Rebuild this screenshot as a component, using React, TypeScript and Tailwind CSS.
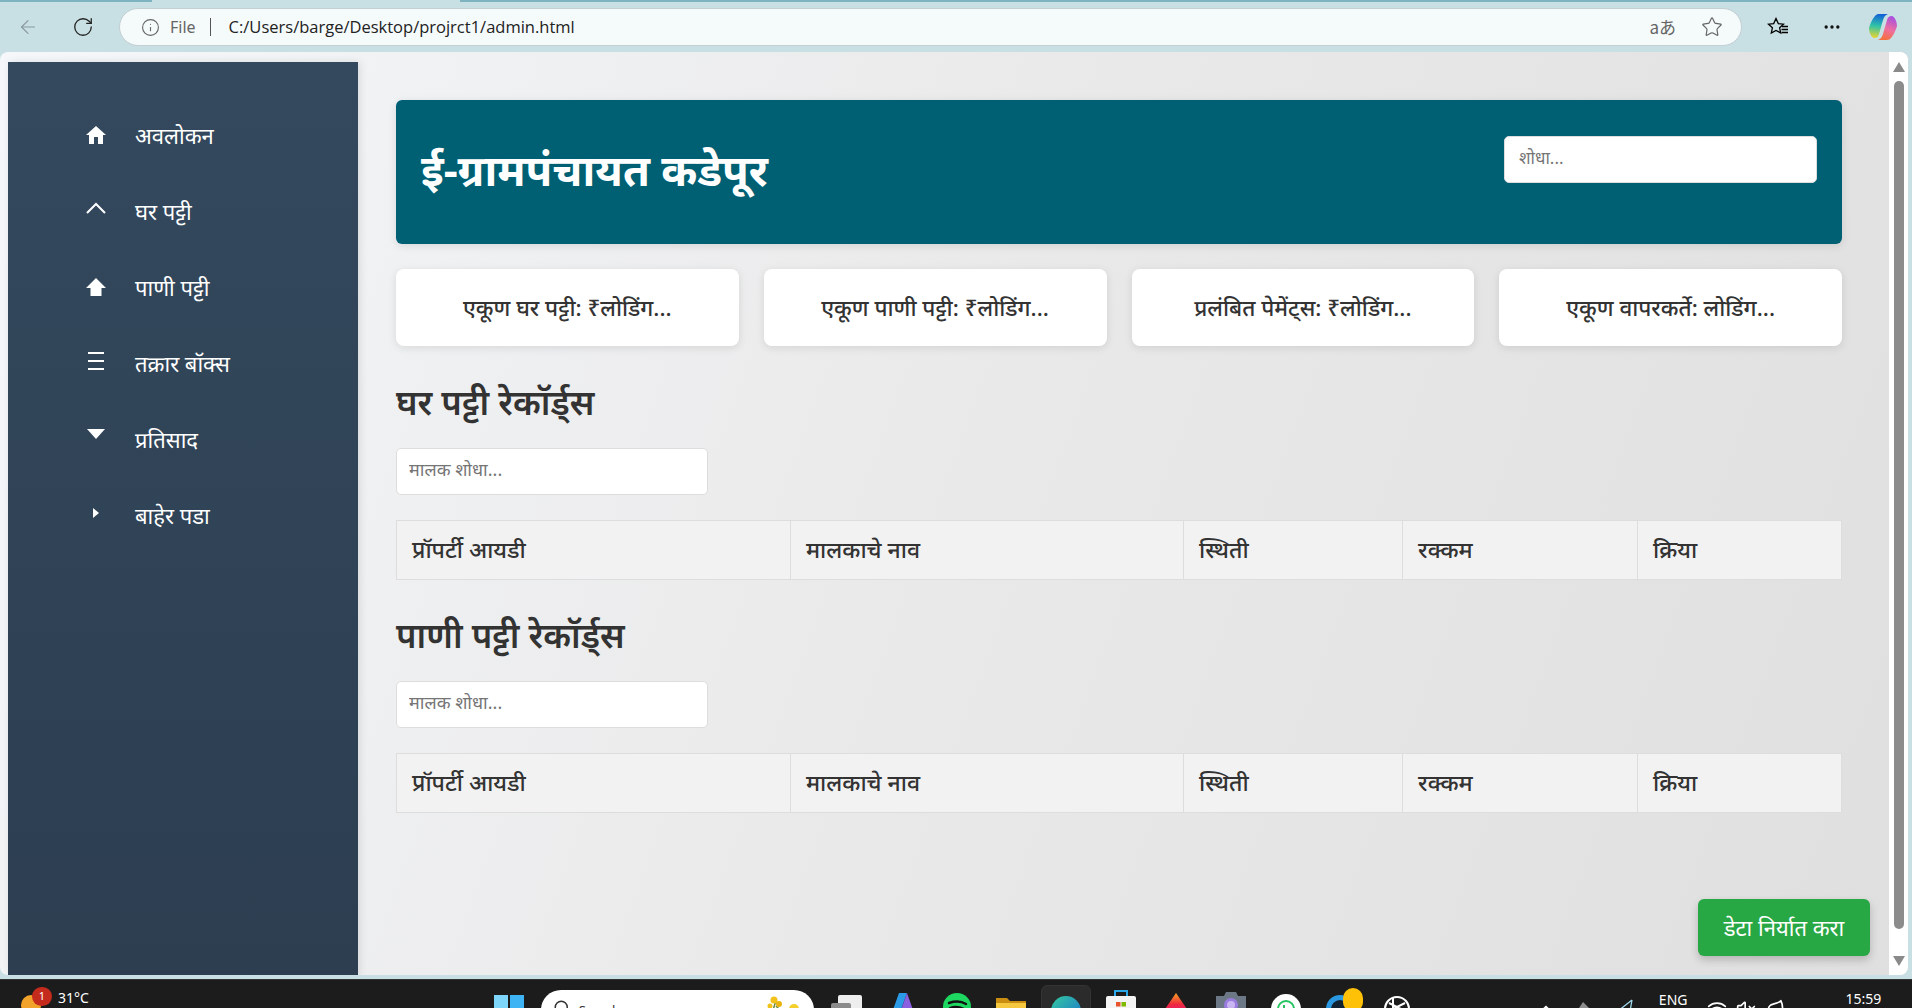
import { ArrowLeft, RotateCw, Info, Star, MoreHorizontal, ChevronUp, Wifi, VolumeX, Leaf, Search } from "lucide-react";
import type { ReactNode } from "react";

const font = "font-['Noto_Sans','Liberation_Sans',sans-serif]";

function HouseIcon() {
  return (
    <svg viewBox="0 0 20 18" className="mt-[4px] w-5 h-[18px] fill-white">
      <path d="M10 0 L20 9 H17 V18 H12 V11 H8 V18 H3 V9 H0 Z" />
    </svg>
  );
}

function UpChevron() {
  return (
    <svg viewBox="0 0 20 12" className="mb-[2px] w-5 h-3 fill-none stroke-white stroke-2">
      <path d="M1 11 L10 2 L19 11" />
    </svg>
  );
}

function UpArrow() {
  return (
    <svg viewBox="0 0 20 18" className="mt-[4px] w-5 h-[18px] fill-white">
      <path d="M10 0 L20 10 H15.5 V18 H4.5 V10 H0 Z" />
    </svg>
  );
}

function Burger() {
  return (
    <svg viewBox="0 0 16 18" className="w-4 h-[18px] stroke-white stroke-2">
      <path d="M0 1 H16 M0 9 H16 M0 17 H16" />
    </svg>
  );
}

function CaretDown() {
  return (
    <svg viewBox="0 0 18 10" className="mb-[6px] w-[18px] h-2.5 fill-white">
      <path d="M0 0 H18 L9 10 Z" />
    </svg>
  );
}

function CaretRight() {
  return (
    <svg viewBox="0 0 6 10" className="w-1.5 h-2.5 fill-white">
      <path d="M0 0 L6 5 L0 10 Z" />
    </svg>
  );
}

function CopilotLogo() {
  return (
    <svg viewBox="0 0 28 28" className="w-7 h-7">
      <defs>
        <linearGradient id="cpA" x1="0.5" y1="0" x2="0.4" y2="1">
          <stop offset="0" stopColor="#1260d8" />
          <stop offset="0.5" stopColor="#2fc3a8" />
          <stop offset="1" stopColor="#e8d430" />
        </linearGradient>
        <linearGradient id="cpB" x1="0.7" y1="0" x2="0.4" y2="1">
          <stop offset="0" stopColor="#a64fe0" />
          <stop offset="0.55" stopColor="#ee6ea0" />
          <stop offset="1" stopColor="#f5703c" />
        </linearGradient>
      </defs>
      <path d="M9 1 H19 C16 2 15 4 14 7 L10 21 C9 24 8 25 5 25 C2 24 0 19 0 15 C1 11 4 5 6 3 C7 2 8 1 9 1 Z" fill="url(#cpA)" />
      <path d="M18 27 H9 C12 26 13 24 14 21 L18 7 C19 4 20 3 23 3 C26 4 28 9 28 13 C27 17 24 23 22 25 C21 26 20 27 18 27 Z" fill="url(#cpB)" />
    </svg>
  );
}

function FavoritesIcon() {
  return (
    <svg viewBox="0 0 22 20" className="w-[22px] h-5 fill-none stroke-black stroke-[1.3]">
      <path d="M9 1.5 L11.3 6.6 L16.5 7.2 L12.6 10.8 L13.7 16 L9 13.4 L4.3 16 L5.4 10.8 L1.5 7.2 L6.7 6.6 Z" />
      <path d="M15 9.5 H21 M14.5 12.5 H21 M14.5 15.5 H21" />
    </svg>
  );
}

function NavItem({ icon, label }: { icon: ReactNode; label: string }) {
  return (
    <a className="h-[76px] flex items-center">
      <span className="w-[30px] ml-[73px] mr-[24px] flex justify-center items-center -mt-1">{icon}</span>
      <span className="text-[22px] text-white">{label}</span>
    </a>
  );
}

function Stat({ text }: { text: string }) {
  return (
    <div className="flex-1 h-[77px] bg-white rounded-lg shadow-[0_2px_8px_rgba(0,0,0,0.1)] flex items-center justify-center text-[22.5px] font-medium text-[#333]">
      {text}
    </div>
  );
}

function Records({ title }: { title: string }) {
  return (
    <section>
      <h2 className="h-[88px] flex items-center text-[34.5px] font-semibold text-[#333]">{title}</h2>
      <input
        placeholder="मालक शोधा..."
        className="mt-[2px] block w-[312px] h-[47px] px-3 pb-[5px] bg-white border border-[#ddd] rounded-[5px] text-[18px] placeholder:text-[#757575]"
      />
      <table className="mt-[25px] w-full table-fixed border-collapse text-[23px] font-medium text-[#333]">
        <thead>
          <tr className="h-[59px] bg-[#f2f2f2]">
            <th className="w-[394px] border border-[#ddd] px-[15px] pb-[2px] text-left font-medium">प्रॉपर्टी आयडी</th>
            <th className="w-[393px] border border-[#ddd] px-[15px] pb-[2px] text-left font-medium">मालकाचे नाव</th>
            <th className="w-[219px] border border-[#ddd] px-[15px] pb-[2px] text-left font-medium">स्थिती</th>
            <th className="w-[235px] border border-[#ddd] px-[15px] pb-[2px] text-left font-medium">रक्कम</th>
            <th className="border border-[#ddd] px-[15px] pb-[2px] text-left font-medium">क्रिया</th>
          </tr>
        </thead>
      </table>
    </section>
  );
}

// taskbar icons are cut off by the screen edge, same as the screenshot
function WinLogo() {
  return (
    <svg viewBox="0 0 30 30" className="mt-[15px] w-[30px] h-[30px]">
      <rect x="0" y="0" width="14" height="14" fill="#7fd6fb" />
      <rect x="16" y="0" width="14" height="14" fill="#3fb4f4" />
      <rect x="0" y="16" width="14" height="14" fill="#3fb4f4" />
      <rect x="16" y="16" width="14" height="14" fill="#1a8fe0" />
    </svg>
  );
}

function Flowers() {
  return (
    <svg viewBox="0 0 40 20" className="w-10 h-5 shrink-0">
      <path d="M10 20 L14 6 M14 12 L22 20" stroke="#6d8a3c" strokeWidth="1.5" />
      <circle cx="12" cy="6" r="3.5" fill="#f2c21a" />
      <circle cx="17" cy="10" r="3" fill="#e8b40f" />
      <circle cx="8" cy="12" r="2.5" fill="#f2c21a" />
      <circle cx="32" cy="15" r="5" fill="#f5cf2b" />
    </svg>
  );
}

function FileStack() {
  return (
    <svg viewBox="0 0 32 24" className="mt-[15px] w-8 h-6">
      <rect x="7" y="0" width="24" height="24" rx="2" fill="#eee" />
      <rect x="0" y="8" width="20" height="16" rx="2" fill="#8b8b8b" />
    </svg>
  );
}

function CopilotApp() {
  return (
    <svg viewBox="0 0 28 28" className="mt-[13px] w-7 h-7">
      <path d="M10 0 H18 L8 28 H0 Z" fill="#2b9be8" />
      <path d="M18 0 L28 28 H14 L11 20 Z" fill="#8a5fe0" />
    </svg>
  );
}

function Spotify() {
  return (
    <svg viewBox="0 0 28 28" className="mt-[13px] w-7 h-7">
      <circle cx="14" cy="14" r="14" fill="#1ed760" />
      <path d="M6 10 C12 8 18 8 23 11 M7 15 C12 13 17 14 21 16" stroke="#111" strokeWidth="2.4" fill="none" strokeLinecap="round" />
    </svg>
  );
}

function Folder() {
  return (
    <svg viewBox="0 0 30 24" className="mt-[16px] w-[30px] h-6">
      <path d="M0 2 H11 L14 5 H30 V24 H0 Z" fill="#c98d12" />
      <rect x="0" y="7" width="30" height="17" fill="#f5c83f" />
    </svg>
  );
}

function EdgeActive() {
  return (
    <div className="mt-[5px] w-[50px] h-10 flex justify-center rounded-md bg-[#2b2b2b] border border-[#333]">
      <svg viewBox="0 0 30 30" className="mt-[10px] w-[30px] h-[30px] shrink-0">
        <defs>
          <linearGradient id="edgeG" x1="0" y1="0" x2="1" y2="1">
            <stop offset="0" stopColor="#35c9a0" />
            <stop offset="1" stopColor="#1a70d0" />
          </linearGradient>
        </defs>
        <circle cx="15" cy="15" r="15" fill="url(#edgeG)" />
        <circle cx="18" cy="20" r="7" fill="#0c3f7f" />
      </svg>
    </div>
  );
}

function StoreBag() {
  return (
    <svg viewBox="0 0 30 30" className="mt-[8px] w-[30px] h-[30px]">
      <path d="M9 8 V3 H21 V8" fill="none" stroke="#2aa7e8" strokeWidth="2" />
      <rect x="0" y="8" width="30" height="22" rx="2" fill="#f4f4f4" />
      <rect x="10" y="14" width="4.5" height="4.5" fill="#e8532b" />
      <rect x="15.5" y="14" width="4.5" height="4.5" fill="#7fba00" />
    </svg>
  );
}

function RedGem() {
  return (
    <svg viewBox="0 0 30 30" className="mt-[13px] w-[30px] h-[30px]">
      <defs>
        <linearGradient id="gemG" x1="0.5" y1="0" x2="0.5" y2="1">
          <stop offset="0" stopColor="#f5a623" />
          <stop offset="0.5" stopColor="#ee2a3c" />
          <stop offset="1" stopColor="#e0117f" />
        </linearGradient>
      </defs>
      <path d="M15 0 L30 22 H0 Z" fill="url(#gemG)" />
    </svg>
  );
}

function Camera() {
  return (
    <svg viewBox="0 0 30 30" className="mt-[11px] w-[30px] h-[30px]">
      <path d="M0 5 H8 L10 1 H20 L22 5 H30 V30 H0 Z" fill="#6d7886" />
      <circle cx="15" cy="14" r="7" fill="#9a7be0" />
      <circle cx="15" cy="14" r="4" fill="#c9b6f0" />
    </svg>
  );
}

function WhatsApp() {
  return (
    <svg viewBox="0 0 30 30" className="mt-[14px] w-[30px] h-[30px]">
      <circle cx="15" cy="15" r="15" fill="#fff" />
      <circle cx="15" cy="15" r="8" fill="none" stroke="#25c45f" strokeWidth="2" />
      <path d="M13 11 V16 H17" fill="none" stroke="#25c45f" strokeWidth="2" />
    </svg>
  );
}

function BlueBadge() {
  return (
    <div className="relative mt-[15px] w-7 h-7 rounded-full border-[5px] border-[#2a98e0] bg-[#123]">
      <span className="absolute left-[12px] -top-[12px] w-5 h-6 rounded-full bg-[#ffc107]" />
    </div>
  );
}

function GptKnot() {
  return (
    <svg viewBox="0 0 30 30" className="mt-[14px] w-[30px] h-[30px] fill-none stroke-white stroke-2">
      <circle cx="15" cy="15" r="12" />
      <path d="M7 9 L19 15 V27 M23 9 L11 15 V3 M5 19 L15 13 L25 19" />
    </svg>
  );
}

function Pencil() {
  return (
    <svg viewBox="0 0 18 18" className="mt-[22px] w-[18px] h-[18px]">
      <path d="M4 0 L16 12 L10 18 L0 6 Z" fill="#8d8d8d" />
    </svg>
  );
}

function PaperPlane() {
  return (
    <svg viewBox="0 0 16 18" className="mt-[19px] w-4 h-[18px] fill-none stroke-[#9ed8ea] stroke-[1.3]">
      <path d="M15 1 L1 12 L9 12 M15 1 L12 18" />
    </svg>
  );
}

export default function App() {
  return (
    <div className={`${font} relative h-screen w-full flex flex-col overflow-hidden bg-[#c8dfe3]`}>
      {/* browser toolbar */}
      <div className="h-[2px] shrink-0 flex">
        <div className="w-[152px] bg-[#7fb3bf]" />
        <div className="w-[308px]" />
        <div className="flex-1 bg-[#7fb3bf]" />
      </div>
      <div className="h-[50px] shrink-0 flex items-center text-[#333]">
        <ArrowLeft className="ml-[17px] w-[22px] h-[22px] text-[#8a9a9e]" strokeWidth={1.3} />
        <RotateCw className="ml-[33px] w-[22px] h-[22px] text-[#222]" strokeWidth={1.4} />
        <div className="ml-[25px] w-[1623px] h-[38px] flex items-center bg-[#f5fafb] rounded-full border border-[#c3cfd2]">
          <Info className="ml-[21px] w-[19px] h-[19px] text-[#666]" strokeWidth={1.4} />
          <span className="ml-[10px] text-[16px] text-[#666]">File</span>
          <span className="ml-[14px] w-px h-[18px] bg-[#555]" />
          <span className="ml-[18px] text-[16.5px] text-[#222] font-['Open_Sans',sans-serif]">C:/Users/barge/Desktop/projrct1/admin.html</span>
          <span className="ml-auto text-[17px] text-[#666] font-['Noto_Sans_CJK_JP',sans-serif]">aあ</span>
          <Star className="ml-[25px] mr-[18px] w-[22px] h-[22px] text-[#666]" strokeWidth={1.3} />
        </div>
        <span className="ml-[25px]"><FavoritesIcon /></span>
        <MoreHorizontal className="ml-[33px] w-5 h-5 text-[#111]" />
        <span className="ml-[27px]"><CopilotLogo /></span>
      </div>

      {/* page */}
      <div className="flex-1 min-h-0 mr-[4px] mb-[4px] flex rounded-t-lg rounded-b-lg overflow-hidden bg-linear-[110deg] from-[#f5f7fa] via-[#e9e9e9] to-[#dfdfdf]">
        <nav className="ml-2 mt-[10px] w-[350px] shrink-0 pt-[35px] bg-linear-to-b from-[#34495e] to-[#2c3e50] shadow-[2px_0_8px_rgba(0,0,0,0.1)]">
          <NavItem icon={<HouseIcon />} label="अवलोकन" />
          <NavItem icon={<UpChevron />} label="घर पट्टी" />
          <NavItem icon={<UpArrow />} label="पाणी पट्टी" />
          <NavItem icon={<Burger />} label="तक्रार बॉक्स" />
          <NavItem icon={<CaretDown />} label="प्रतिसाद" />
          <NavItem icon={<CaretRight />} label="बाहेर पडा" />
        </nav>

        <main className="flex-1 min-w-0 pt-[48px] pl-[38px] pr-[47px]">
          <header className="h-[144px] flex items-center justify-between rounded-md bg-[#006073] px-[25px] shadow-[0_2px_8px_rgba(0,0,0,0.1)]">
            <h1 className="-mt-[4px] text-[43.5px] font-bold text-white">ई-ग्रामपंचायत कडेपूर</h1>
            <input
              placeholder="शोधा..."
              className="w-[313px] h-[47px] -mt-[25px] px-[14px] pb-[5px] bg-white border border-[#ddd] rounded-[5px] text-[17px] placeholder:text-[#757575]"
            />
          </header>

          <div className="mt-[25px] flex gap-[25px]">
            <Stat text="एकूण घर पट्टी: ₹लोडिंग..." />
            <Stat text="एकूण पाणी पट्टी: ₹लोडिंग..." />
            <Stat text="प्रलंबित पेमेंट्स: ₹लोडिंग..." />
            <Stat text="एकूण वापरकर्ते: लोडिंग..." />
          </div>

          <div className="mt-[12px]">
            <Records title="घर पट्टी रेकॉर्ड्स" />
          </div>
          <div className="mt-[11px]">
            <Records title="पाणी पट्टी रेकॉर्ड्स" />
          </div>
        </main>

        {/* scrollbar */}
        <div className="w-[19px] shrink-0 bg-white flex flex-col items-center pt-[10px] pb-[9px]">
          <svg viewBox="0 0 12 10" className="w-3 h-2.5 fill-[#8a8a8a]"><path d="M6 0 L12 10 H0 Z" /></svg>
          <div className="mt-[9px] w-[10px] flex-1 rounded-full bg-[#8c8c8c]" />
          <svg viewBox="0 0 12 10" className="mt-[27px] w-3 h-2.5 fill-[#8a8a8a]"><path d="M0 0 H12 L6 10 Z" /></svg>
        </div>
      </div>

      {/* taskbar */}
      <div className="h-[29px] shrink-0 flex items-start overflow-hidden bg-[#1c1c1c] border-t border-[#333] text-white text-[14px]">
        <div className="relative ml-[21px] mt-[15px] w-5 h-5 rounded-full bg-[#f2a32c]">
          <span className="absolute left-[11px] -top-[8px] w-5 h-[19px] rounded-full bg-[#c42b1c] text-[11px] flex items-center justify-center">1</span>
        </div>
        <span className="ml-[17px] mt-[7px]">31°C</span>
        <span className="ml-[405px]"><WinLogo /></span>
        <div className="ml-[17px] mt-[10px] w-[273px] h-10 shrink-0 flex items-start pl-[12px] pr-[12px] pt-[9px] rounded-full bg-white text-[#333] text-[13px]">
          <Search className="w-[18px] h-[18px]" />
          <span className="ml-2 mt-[2px]">Search</span>
          <span className="ml-auto -mt-[5px]"><Flowers /></span>
        </div>
        <span className="ml-[17px]"><FileStack /></span>
        <span className="ml-[26px]"><CopilotApp /></span>
        <span className="ml-[26px]"><Spotify /></span>
        <span className="ml-[25px]"><Folder /></span>
        <span className="ml-[15px]"><EdgeActive /></span>
        <span className="ml-[15px]"><StoreBag /></span>
        <span className="ml-[25px]"><RedGem /></span>
        <span className="ml-[25px]"><Camera /></span>
        <span className="ml-[25px]"><WhatsApp /></span>
        <span className="ml-[25px]"><BlueBadge /></span>
        <span className="ml-[28px]"><GptKnot /></span>
        <ChevronUp className="ml-[124px] mt-[19px] w-5 h-5" />
        <span className="ml-[23px]"><Pencil /></span>
        <span className="ml-[20px]"><PaperPlane /></span>
        <span className="ml-[26px] mt-[9px]">ENG</span>
        <Wifi className="ml-[20px] mt-[19px] w-5 h-5" />
        <VolumeX className="ml-[9px] mt-[19px] w-5 h-5" />
        <Leaf className="ml-[9px] mt-[19px] w-5 h-5" />
        <span className="ml-[60px] mt-[8px]">15:59</span>
      </div>

      {/* floating export button */}
      <button className="absolute right-[42px] bottom-[52px] w-[172px] h-[57px] rounded-md bg-[#28a745] text-white text-[22px] shadow-[0_4px_8px_rgba(0,0,0,0.2)]">
        डेटा निर्यात करा
      </button>
    </div>
  );
}
